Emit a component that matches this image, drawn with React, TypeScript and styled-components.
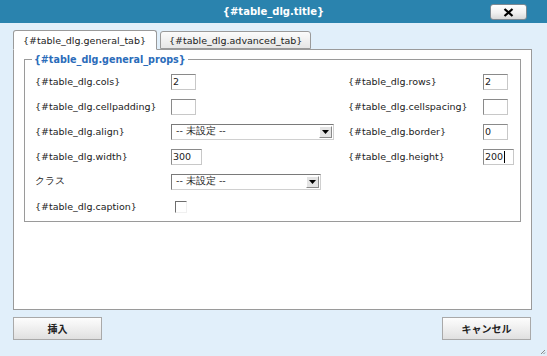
import React from 'react';
import styled, { createGlobalStyle } from 'styled-components';

const GlobalStyle = createGlobalStyle`
  html, body {
    margin: 0;
    padding: 0;
    width: 547px;
    height: 356px;
    overflow: hidden;
    background: #e1effa;
  }
`;

const Dialog = styled.div`
  width: 547px;
  height: 356px;
  display: flex;
  flex-direction: column;
  background: #e1effa;
  font-family: 'DejaVu Sans', Verdana, sans-serif;
  font-size: 9.5px;
  color: #222;
  position: relative;
`;

const TitleBar = styled.div`
  height: 23px;
  background: #2a83ae;
  display: flex;
  align-items: center;
  justify-content: center;
  position: relative;
  color: #fff;
  font-weight: bold;
  font-size: 10px;
`;

const CloseButton = styled.button`
  position: absolute;
  right: 20px;
  top: 4px;
  width: 37px;
  height: 16px;
  padding: 0;
  border: 1px solid #7d8a93;
  border-radius: 3px;
  background: linear-gradient(#ffffff, #f1f1f1 55%, #d9d9d9);
  display: flex;
  align-items: center;
  justify-content: center;
`;

const Body = styled.div`
  flex: 1;
  display: flex;
  flex-direction: column;
  padding: 8px 15px 0 13px;
`;

const Tabs = styled.div`
  display: flex;
  gap: 3px;
  align-items: flex-end;
  height: 18px;
  position: relative;
  z-index: 1;
`;

const Tab = styled.div<{ $active?: boolean }>`
  height: ${(p) => (p.$active ? '18px' : '16px')};
  padding: ${(p) => (p.$active ? '0 10px 0 9px' : '0 8px')};
  display: flex;
  align-items: center;
  border: 1px solid #9a9a9a;
  border-bottom: ${(p) => (p.$active ? '1px solid #fff' : '1px solid #9a9a9a')};
  border-radius: 3px 3px 0 0;
  background: ${(p) => (p.$active ? '#fff' : 'linear-gradient(#fbfbfb, #e6e6e6)')};
  color: #222;
  margin-bottom: ${(p) => (p.$active ? '-1px' : '0')};
`;

const Panel = styled.div`
  height: 259px;
  border: 1px solid #9a9a9a;
  background: #fff;
  padding: 0 10px;
`;

const Fieldset = styled.fieldset`
  margin: 4px 0 0 0;
  padding: 4px 0 8px 10px;
  border: 1px solid #9a9a9a;
  height: 168px;
  box-sizing: border-box;
`;

const Legend = styled.legend`
  color: #2b6cba;
  font-weight: bold;
  font-size: 9.6px;
  padding: 0 2px;
  margin-left: -3px;
`;

const Grid = styled.div`
  display: grid;
  grid-template-columns: 136px 177px 135px auto;
  grid-auto-rows: 25px;
  align-items: center;
`;

const Label = styled.div`
  white-space: nowrap;
`;

const TextInput = styled.div<{ $w: number }>`
  width: ${(p) => p.$w}px;
  height: 16px;
  box-sizing: border-box;
  border: 1px solid #8a8a8a;
  border-right-color: #c8c8c8;
  border-bottom-color: #c8c8c8;
  background: #fff;
  font-size: 9.5px;
  line-height: 13px;
  padding-left: 1px;
  display: flex;
  align-items: center;
`;

const Caret = styled.span`
  display: inline-block;
  width: 1px;
  height: 12px;
  background: #000;
  margin-left: 1px;
`;

const Select = styled.div<{ $w: number }>`
  width: ${(p) => p.$w}px;
  height: 16px;
  box-sizing: border-box;
  border: 1px solid #7a7a7a;
  border-right-color: #d0d0d0;
  border-bottom-color: #d0d0d0;
  background: #fff;
  display: flex;
  align-items: center;
  justify-content: space-between;
  padding-left: 4px;
`;

const SelectArrow = styled.div`
  width: 13px;
  height: 12px;
  margin-right: 1px;
  background: #e4e4e4;
  border-right: 1px solid #8a8a8a;
  border-bottom: 1px solid #8a8a8a;
  border-top: 1px solid #fff;
  border-left: 1px solid #fff;
  box-sizing: border-box;
  display: flex;
  align-items: center;
  justify-content: center;
`;

const Checkbox = styled.div`
  width: 12px;
  height: 12px;
  margin-left: 4px;
  box-sizing: border-box;
  border-top: 1px solid #6e6e6e;
  border-left: 1px solid #6e6e6e;
  border-right: 1px solid #f0f0f0;
  border-bottom: 1px solid #f0f0f0;
`;

const Footer = styled.div`
  display: flex;
  justify-content: space-between;
  margin-top: 7px;
  padding-right: 1px;
`;

const Button = styled.button`
  width: 89px;
  height: 23px;
  border: 1px solid #a9a9a9;
  background: linear-gradient(#fdfdfd, #ececec 60%, #e0e0e0);
  font-family: 'DejaVu Sans', 'Noto Sans CJK JP', sans-serif;
  font-weight: bold;
  font-size: 10px;
  color: #222;
  padding: 0;
`;

const Grip = styled.svg`
  position: absolute;
  right: 1px;
  bottom: 1px;
`;

const Arrow = () => (
  <svg width="7" height="4" viewBox="0 0 7 4">
    <path d="M0 0h7L3.5 4z" fill="#000" />
  </svg>
);

const rows: Array<[React.ReactNode, React.ReactNode, React.ReactNode?, React.ReactNode?]> = [
  [
    '{#table_dlg.cols}',
    <TextInput $w={25}>2</TextInput>,
    '{#table_dlg.rows}',
    <TextInput $w={25}>2</TextInput>,
  ],
  [
    '{#table_dlg.cellpadding}',
    <TextInput $w={25} />,
    '{#table_dlg.cellspacing}',
    <TextInput $w={25} />,
  ],
  [
    '{#table_dlg.align}',
    <Select $w={163}>
      <span>-- 未設定 --</span>
      <SelectArrow>
        <Arrow />
      </SelectArrow>
    </Select>,
    '{#table_dlg.border}',
    <TextInput $w={25}>0</TextInput>,
  ],
  [
    '{#table_dlg.width}',
    <TextInput $w={31}>300</TextInput>,
    '{#table_dlg.height}',
    <TextInput $w={31}>
      200
      <Caret />
    </TextInput>,
  ],
  [
    'クラス',
    <Select $w={150}>
      <span>-- 未設定 --</span>
      <SelectArrow>
        <Arrow />
      </SelectArrow>
    </Select>,
  ],
  ['{#table_dlg.caption}', <Checkbox />],
];

export default function App() {
  return (
    <>
      <GlobalStyle />
      <Dialog>
        <TitleBar>
          {'{#table_dlg.title}'}
          <CloseButton>
            <svg width="11" height="9" viewBox="0 0 11 9">
              <path d="M1.5 1l8 7M9.5 1l-8 7" stroke="#000" strokeWidth="2.2" />
            </svg>
          </CloseButton>
        </TitleBar>
        <Body>
          <Tabs>
            <Tab $active>{'{#table_dlg.general_tab}'}</Tab>
            <Tab>{'{#table_dlg.advanced_tab}'}</Tab>
          </Tabs>
          <Panel>
            <Fieldset>
              <Legend>{'{#table_dlg.general_props}'}</Legend>
              <Grid>
                {rows.map((r, i) => (
                  <React.Fragment key={i}>
                    <Label>{r[0]}</Label>
                    <div>{r[1]}</div>
                    <Label>{r[2] ?? ''}</Label>
                    <div>{r[3] ?? null}</div>
                  </React.Fragment>
                ))}
              </Grid>
            </Fieldset>
          </Panel>
          <Footer>
            <Button>挿入</Button>
            <Button>キャンセル</Button>
          </Footer>
        </Body>
        <Grip width="6" height="6" viewBox="0 0 6 6">
          <path d="M5 1L1 5M5 3.5L3.5 5" stroke="#888" strokeWidth="1" />
        </Grip>
      </Dialog>
    </>
  );
}
